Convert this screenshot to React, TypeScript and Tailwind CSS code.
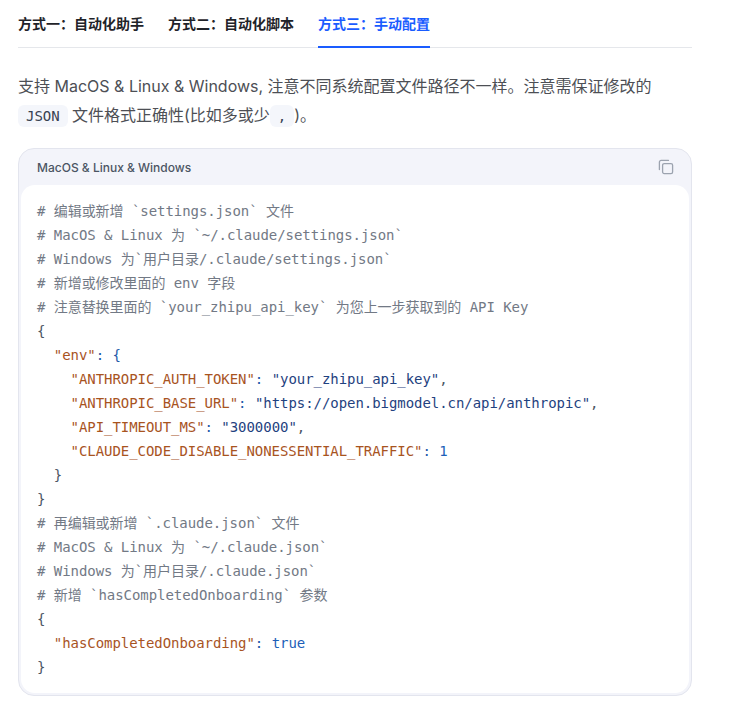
const key = "text-[#a8541f]";
const str = "text-[#1f4280]";
const num = "text-[#1d5fb8]";
const punc = "text-[#4b5563]";

const Comment = ({ children }: { children: string }) => (
  <div className="text-[#727985]">{children}</div>
);

const Plain = ({ children }: { children: string }) => (
  <div className={punc}>{children}</div>
);

const Pair = ({ indent, k, v, vClass, tail }: { indent: string; k: string; v: string; vClass: string; tail?: string }) => (
  <div className={punc}>
    {indent}
    <span className={key}>{k}</span>
    <span className="text-[#1e5aa8]">:</span> <span className={vClass}>{v}</span>
    {tail}
  </div>
);

const inlineCode = "rounded-md bg-[#f4f6fb] px-2 py-[3px] font-['DejaVu_Sans_Mono',monospace] text-sm tracking-[-0.05px] text-[#374151]";

export default function App() {
  return (
    <div className="min-h-[721px] bg-white px-[18px] font-['Inter','Noto_Sans_CJK_SC',sans-serif]">
      <div className="w-[674px]">
        {/* Tabs */}
        <div className="flex h-[48px] gap-6 border-b border-[#e5e7eb]">
          <div className="flex h-[48px] items-center text-sm font-semibold text-[#1f2329]">方式一：自动化助手</div>
          <div className="flex h-[48px] items-center text-sm font-semibold text-[#1f2329]">方式二：自动化脚本</div>
          <div className="flex h-[48px] items-center border-y-2 border-t-transparent border-b-[#1a5cff] text-sm font-semibold text-[#1a5cff]">方式三：手动配置</div>
        </div>

        <p className="mt-[24px] text-base leading-[29px] text-[#4d4f55]">
          支持 MacOS &amp; Linux &amp; Windows, 注意不同系统配置文件路径不一样。注意需保证修改的{" "}
          <code className={inlineCode}>JSON</code>{" "}
          文件格式正确性(比如多或少<code className={inlineCode}>,</code>)。
        </p>

        {/* Code block */}
        <div className="mt-[18px] rounded-[16px] border border-[#e3e5ee] bg-[#f3f4fa] px-[2px] pb-[2px]">
          <div className="flex h-[36px] items-center justify-between pl-[16px] pr-[15px]">
            <span className="mt-px text-xs font-medium text-[#4b5563]">MacOS &amp; Linux &amp; Windows</span>
            <svg width="16" height="16" viewBox="0 0 16 16" fill="none" stroke="#9ca3af" strokeWidth="1.3" strokeLinecap="round" strokeLinejoin="round">
              <rect x="4.6" y="4.6" width="10" height="10" rx="1.6" />
              <path d="M1.4 10.5V3.2c0-1 .8-1.8 1.8-1.8h7.3" />
            </svg>
          </div>
          <div className="rounded-[14px] bg-white pb-[14px] pl-[16px] pt-[14px] font-['DejaVu_Sans_Mono','Noto_Sans_CJK_SC',monospace] text-sm leading-6 tracking-[-0.05px] whitespace-pre">
            <Comment>{"# 编辑或新增 `settings.json` 文件"}</Comment>
            <Comment>{"# MacOS & Linux 为 `~/.claude/settings.json`"}</Comment>
            <Comment>{"# Windows 为`用户目录/.claude/settings.json`"}</Comment>
            <Comment>{"# 新增或修改里面的 env 字段"}</Comment>
            <Comment>{"# 注意替换里面的 `your_zhipu_api_key` 为您上一步获取到的 API Key"}</Comment>
            <Plain>{"{"}</Plain>
            <Pair indent="  " k={'"env"'} v="{" vClass="text-[#1e5aa8]" />
            <Pair indent="    " k={'"ANTHROPIC_AUTH_TOKEN"'} v={'"your_zhipu_api_key"'} vClass={str} tail="," />
            <Pair indent="    " k={'"ANTHROPIC_BASE_URL"'} v={'"https://open.bigmodel.cn/api/anthropic"'} vClass={str} tail="," />
            <Pair indent="    " k={'"API_TIMEOUT_MS"'} v={'"3000000"'} vClass={str} tail="," />
            <Pair indent="    " k={'"CLAUDE_CODE_DISABLE_NONESSENTIAL_TRAFFIC"'} v="1" vClass={num} />
            <Plain>{"  }"}</Plain>
            <Plain>{"}"}</Plain>
            <Comment>{"# 再编辑或新增 `.claude.json` 文件"}</Comment>
            <Comment>{"# MacOS & Linux 为 `~/.claude.json`"}</Comment>
            <Comment>{"# Windows 为`用户目录/.claude.json`"}</Comment>
            <Comment>{"# 新增 `hasCompletedOnboarding` 参数"}</Comment>
            <Plain>{"{"}</Plain>
            <Pair indent="  " k={'"hasCompletedOnboarding"'} v="true" vClass={num} />
            <Plain>{"}"}</Plain>
          </div>
        </div>
      </div>
    </div>
  );
}
